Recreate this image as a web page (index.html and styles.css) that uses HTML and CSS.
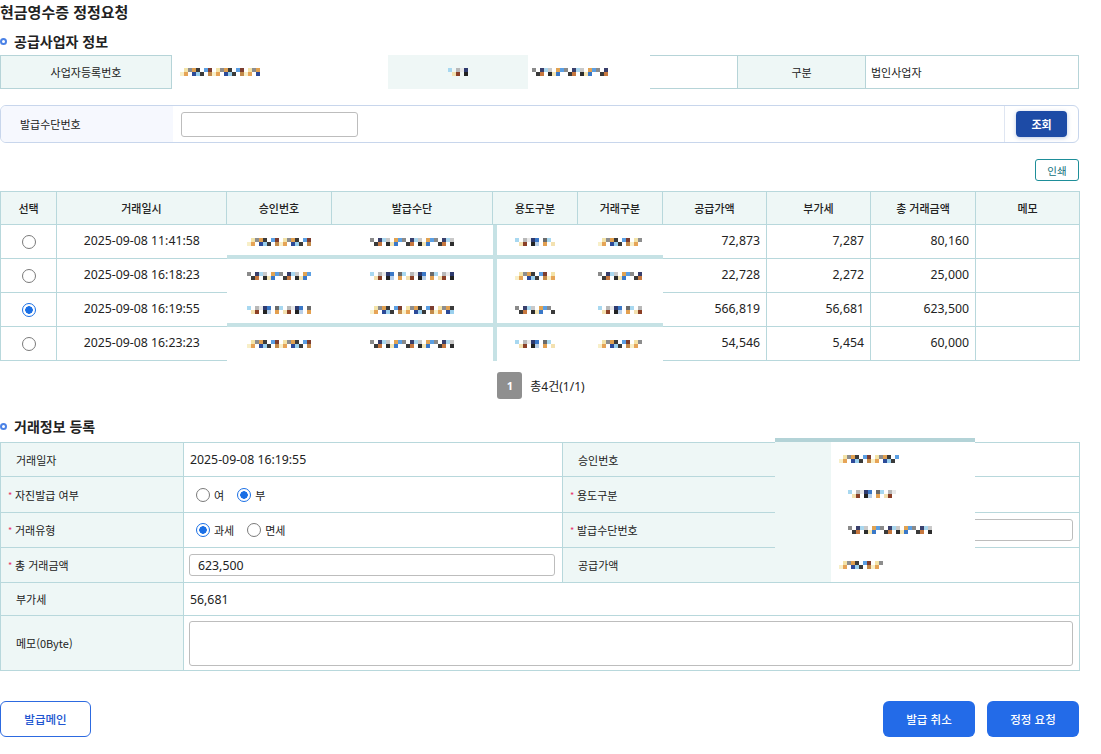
FILE: index.html
```html
<!DOCTYPE html>
<html lang="ko">
<head>
<meta charset="utf-8">
<title>현금영수증 정정요청</title>
<link rel="stylesheet" href="styles.css">
</head>
<body>
<div class="page">
  <h1 class="title">현금영수증 정정요청</h1>
  <h2 class="sec"><span class="ring"></span>공급사업자 정보</h2>

  <div class="info">
    <div class="ic lab">사업자등록번호</div>
    <div class="ic val1"><span class="mz pa w80"></span></div>
    <div class="ic lab2"><span class="mz pc w20"></span></div>
    <div class="ic val2"><span class="mz pb w76"></span></div>
    <div class="ic empty"></div>
    <div class="ic lab">구분</div>
    <div class="ic vend">법인사업자</div>
  </div>

  <div class="search">
    <div class="s-lab">발급수단번호</div>
    <div class="s-field"><input class="s-input" type="text"></div>
    <div class="s-btncell"><button class="btn-q">조회</button></div>
  </div>

  <div class="print-row"><button class="btn-print">인쇄</button></div>

  <table class="grid">
    <colgroup>
      <col class="k1"><col class="k2"><col class="k3"><col class="k4"><col class="k5">
      <col class="k6"><col class="k7"><col class="k8"><col class="k9"><col class="k10">
    </colgroup>
    <thead>
      <tr>
        <th>선택</th><th>거래일시</th><th>승인번호</th><th>발급수단</th><th>용도구분</th>
        <th>거래구분</th><th>공급가액</th><th>부가세</th><th>총 거래금액</th><th>메모</th>
      </tr>
    </thead>
    <tbody>
      <tr class="bar">
        <td><span class="radio"></span></td>
        <td>2025-09-08 11:41:58</td>
        <td class="rd"><span class="mz pa w64"></span></td>
        <td class="rd"><span class="mz pb w84"></span></td>
        <td class="rd c5"><span class="mz pc w40"></span></td>
        <td class="rd"><span class="mz pa w44"></span></td>
        <td class="num">72,873</td><td class="num">7,287</td><td class="num">80,160</td><td></td>
      </tr>
      <tr>
        <td><span class="radio"></span></td>
        <td>2025-09-08 16:18:23</td>
        <td class="rd"><span class="mz pb w64"></span></td>
        <td class="rd"><span class="mz pc w84"></span></td>
        <td class="rd c5"><span class="mz pa w40"></span></td>
        <td class="rd"><span class="mz pb w44"></span></td>
        <td class="num">22,728</td><td class="num">2,272</td><td class="num">25,000</td><td></td>
      </tr>
      <tr class="bar">
        <td><span class="radio on"></span></td>
        <td>2025-09-08 16:19:55</td>
        <td class="rd"><span class="mz pc w64"></span></td>
        <td class="rd"><span class="mz pa w84"></span></td>
        <td class="rd c5"><span class="mz pb w40"></span></td>
        <td class="rd"><span class="mz pc w44"></span></td>
        <td class="num">566,819</td><td class="num">56,681</td><td class="num">623,500</td><td></td>
      </tr>
      <tr>
        <td><span class="radio"></span></td>
        <td>2025-09-08 16:23:23</td>
        <td class="rd"><span class="mz pa w64"></span></td>
        <td class="rd"><span class="mz pb w84"></span></td>
        <td class="rd c5"><span class="mz pc w40"></span></td>
        <td class="rd"><span class="mz pa w44"></span></td>
        <td class="num">54,546</td><td class="num">5,454</td><td class="num">60,000</td><td></td>
      </tr>
    </tbody>
  </table>

  <div class="paging">
    <span class="pg-num">1</span>
    <span class="pg-total">총4건(1/1)</span>
  </div>

  <h2 class="sec sec2"><span class="ring"></span>거래정보 등록</h2>

  <div class="form-wrap">
    <table class="form">
      <colgroup><col class="f1"><col class="f2"><col class="f3"><col class="f4"></colgroup>
      <tr class="r1">
        <th>거래일자</th>
        <td>2025-09-08 16:19:55</td>
        <th>승인번호</th>
        <td></td>
      </tr>
      <tr class="r2">
        <th class="req"><span class="mark">*</span>자진발급 여부</th>
        <td>
          <div class="radios">
            <label class="opt"><span class="radio"></span><span class="kt">여</span></label>
            <label class="opt"><span class="radio on"></span><span class="kt">부</span></label>
          </div>
        </td>
        <th class="req"><span class="mark">*</span>용도구분</th>
        <td></td>
      </tr>
      <tr class="r3">
        <th class="req"><span class="mark">*</span>거래유형</th>
        <td>
          <div class="radios">
            <label class="opt"><span class="radio on"></span><span class="kt">과세</span></label>
            <label class="opt"><span class="radio"></span><span class="kt">면세</span></label>
          </div>
        </td>
        <th class="req"><span class="mark">*</span>발급수단번호</th>
        <td class="pad-in"><input class="f-input" type="text"></td>
      </tr>
      <tr class="r4">
        <th class="req"><span class="mark">*</span>총 거래금액</th>
        <td class="pad-in1"><input class="f-input" type="text" value="623,500"></td>
        <th>공급가액</th>
        <td></td>
      </tr>
      <tr class="r5">
        <th>부가세</th>
        <td colspan="3">56,681</td>
      </tr>
      <tr class="r6">
        <th>메모(0Byte)</th>
        <td colspan="3" class="pad-ta"><textarea class="f-ta"></textarea></td>
      </tr>
    </table>

    <div class="redact">
      <div class="rd-left"></div>
      <div class="rd-right">
        <div class="rd-row"><span class="mz pa w60"></span></div>
        <div class="rd-row in"><span class="mz pc w48"></span></div>
        <div class="rd-row in"><span class="mz pb w84"></span></div>
        <div class="rd-row"><span class="mz pa w44"></span></div>
      </div>
    </div>
  </div>

  <div class="actions">
    <button class="btn-line">발급메인</button>
    <div class="act-right">
      <button class="btn-fill">발급 취소</button>
      <button class="btn-fill">정정 요청</button>
    </div>
  </div>
</div>
</body>
</html>
```

FILE: styles.css
```css
* { box-sizing: border-box; }
html, body { margin: 0; padding: 0; background: #fff; }
body {
  font-family: "Noto Sans", "Noto Sans CJK KR", sans-serif;
  font-size: 12.3px;
  color: #222;
}
.page { width: 1079px; }

.title {
  margin: 0;
  height: 24px;
  line-height: 24px;
  font-family: "Noto Sans CJK KR", sans-serif;
  font-size: 15px;
  font-weight: 700;
  color: #222;
}
.sec {
  margin: 7px 0 0;
  height: 20px;
  display: flex;
  align-items: center;
  gap: 7px;
  font-family: "Noto Sans CJK KR", sans-serif;
  font-size: 14px;
  font-weight: 700;
  color: #222;
}
.sec2 { margin-top: 17px; }
.ring {
  width: 7px;
  height: 7px;
  border: 2px solid #4b82e6;
  border-radius: 50%;
}

/* mosaic (masked values) */
.mz {
  display: inline-block;
  height: 8px;
  vertical-align: middle;
  background-repeat: repeat-x;
  background-size: 32px 4px;
  background-position: 0 0, 0 4px;
}
.pa {
  background-image:
    linear-gradient(90deg, transparent 0 4px, #f3e3a8 4px 8px, #8d8d8d 8px 12px, #e0a050 12px 16px, #3b3b3b 16px 20px, transparent 20px 24px, #5b9fe3 24px 28px, #7c3d2f 28px 32px),
    linear-gradient(90deg, #f8efc8 0 4px, #e6a457 4px 8px, transparent 8px 12px, #2c4a98 12px 16px, #9ad0ee 16px 20px, #3a3a3a 20px 24px, transparent 24px 28px, #c28a4a 28px 32px);
}
.pb {
  background-image:
    linear-gradient(90deg, #8a8a8a 0 4px, transparent 4px 8px, #3a3f6b 8px 12px, #a9d7ef 12px 16px, #c9c9c9 16px 20px, transparent 20px 24px, #e1a352 24px 28px, #5b9fe3 28px 32px),
    linear-gradient(90deg, transparent 0 4px, #3a3a3a 4px 8px, #c7783f 8px 12px, transparent 12px 16px, #2d2d2d 16px 20px, #f5e6b4 20px 24px, #3a78c8 24px 28px, transparent 28px 32px);
}
.pc {
  background-image:
    linear-gradient(90deg, #a8d8f0 0 4px, transparent 4px 8px, #b8b8b8 8px 12px, #e8e8e8 12px 16px, #2e3a6e 16px 20px, #3a78c8 20px 24px, transparent 24px 28px, #6a6a6a 28px 32px),
    linear-gradient(90deg, transparent 0 4px, #f3e1b0 4px 8px, #8b3f26 8px 12px, transparent 12px 16px, #222 16px 20px, #b9cfe8 20px 24px, transparent 24px 28px, #e3a050 28px 32px);
}
.w20 { width: 20px; }
.w40 { width: 40px; }
.w44 { width: 44px; }
.w48 { width: 48px; }
.w60 { width: 60px; }
.w64 { width: 64px; }
.w76 { width: 76px; }
.w80 { width: 80px; }
.w84 { width: 84px; }

/* supplier info row */
.info {
  margin-top: 4px;
  height: 34px;
  display: grid;
  grid-template-columns: 172px 216px 140px 122px 87px 129px 213px;
}
.ic { display: flex; align-items: center; }
.lab {
  justify-content: center;
  background: #eef7f6;
  border: 1px solid #b6d4d8;
  font-family: "Noto Sans CJK KR", sans-serif;
  font-size: 11px;
}
.val1 { padding-left: 8px; }
.lab2 { justify-content: center; background: #eff7f6; }
.val2 { padding-left: 4px; }
.empty { border-top: 1px solid #b6d4d8; border-bottom: 1px solid #b6d4d8; }
.vend {
  border: 1px solid #b6d4d8;
  border-left: 0;
  padding-left: 5px;
  font-family: "Noto Sans CJK KR", sans-serif;
  font-size: 11px;
}

/* search */
.search {
  margin-top: 16px;
  height: 38px;
  border: 1px solid #c8d6ec;
  border-radius: 6px;
  display: flex;
  overflow: hidden;
}
.s-lab {
  width: 172px;
  background: #f6f8fe;
  display: flex;
  align-items: center;
  padding-left: 19px;
  font-family: "Noto Sans CJK KR", sans-serif;
  font-size: 11px;
}
.s-field { flex: 1; display: flex; align-items: center; padding-left: 8px; }
.s-input {
  width: 177px;
  height: 25px;
  border: 1px solid #bdbdbd;
  border-radius: 3px;
  background: #fff;
}
.s-btncell {
  width: 74px;
  border-left: 1px solid #dfe6f2;
  display: flex;
  align-items: center;
  justify-content: center;
}
.btn-q {
  width: 51px;
  height: 26px;
  border: 0;
  border-radius: 4px;
  background: #1d4ba6;
  color: #fff;
  font-family: "Noto Sans CJK KR", sans-serif;
  font-size: 11px;
  font-weight: 700;
  box-shadow: 0 1px 4px rgba(29, 75, 166, 0.3);
}

.print-row { margin-top: 16px; display: flex; justify-content: flex-end; }
.btn-print {
  width: 44px;
  height: 22px;
  border: 1px solid #1e8e99;
  border-radius: 3px;
  background: #fff;
  color: #10707b;
  font-family: "Noto Sans CJK KR", sans-serif;
  font-size: 10.5px;
  padding: 0;
}

/* list table */
.grid {
  margin-top: 10px;
  width: 1079px;
  border-collapse: collapse;
  table-layout: fixed;
}
.k1 { width: 56px; } .k2 { width: 170px; } .k3 { width: 105px; } .k4 { width: 161px; }
.k5 { width: 85px; } .k6 { width: 85px; } .k7 { width: 104px; } .k8 { width: 104px; }
.k9 { width: 105px; } .k10 { width: 104px; }
.grid th, .grid td { border: 1px solid #b8d8dc; padding: 0; }
.grid th {
  height: 33px;
  background: #eef7f6;
  font-family: "Noto Sans CJK KR", sans-serif;
  font-size: 11px;
  font-weight: 500;
  color: #222;
}
.grid td { height: 34px; text-align: center; line-height: 1; }
.grid td.num { text-align: right; padding-right: 6px; }
.grid td.rd {
  border-left-style: hidden;
  border-right-style: hidden;
  border-bottom-style: hidden;
}
.grid tr.bar td.rd { box-shadow: inset 0 -4px 0 #c6e2e5; }
.grid td.rd.c5 { box-shadow: inset 4px 0 0 #c6e2e5; }
.grid tr.bar td.rd.c5 { box-shadow: inset 4px 0 0 #c6e2e5, inset 0 -4px 0 #c6e2e5; }

.radio {
  display: inline-block;
  width: 14px;
  height: 14px;
  border: 1px solid #7a7a7a;
  border-radius: 50%;
  background: #fff;
  vertical-align: middle;
}
.radio.on {
  border-color: #1a6fe5;
  background: radial-gradient(circle, #1a6fe5 0 3.5px, #fff 4px);
}

/* paging */
.paging {
  margin-top: 11px;
  height: 27px;
  display: flex;
  justify-content: center;
  align-items: center;
  gap: 8px;
  padding-left: 3px;
}
.pg-num {
  width: 25px;
  height: 27px;
  border-radius: 3px;
  background: #8f8f8f;
  color: #fff;
  font-weight: 700;
  font-size: 11px;
  display: flex;
  align-items: center;
  justify-content: center;
}
.pg-total { font-size: 12px; color: #222; }

/* form */
.form-wrap { position: relative; margin-top: 6px; }
.form { width: 1079px; border-collapse: collapse; table-layout: fixed; }
.f1 { width: 183px; } .f2 { width: 379px; } .f3 { width: 268px; } .f4 { width: 249px; }
.form th, .form td {
  border: 1px solid #b8d8dc;
  padding: 0 0 0 6px;
  text-align: left;
  font-weight: 400;
}
.form th {
  background: #eef7f6;
  padding-left: 15px;
  font-family: "Noto Sans CJK KR", sans-serif;
  font-size: 11px;
  color: #222;
}
.form th.req { padding-left: 7px; }
.mark {
  display: inline-block;
  width: 7px;
  color: #e8336b;
  font-size: 9px;
  vertical-align: 1px;
}
.r1 td, .r1 th { height: 34px; }
.r2 td, .r2 th { height: 36px; }
.r3 td, .r3 th { height: 35px; }
.r4 td, .r4 th { height: 35px; }
.r5 td, .r5 th { height: 33px; }
.r6 td, .r6 th { height: 55px; }
.radios { display: flex; align-items: center; gap: 13px; margin-left: 6px; }
.opt { display: flex; align-items: center; gap: 4px; }
.kt { font-family: "Noto Sans CJK KR", sans-serif; font-size: 11px; }
.f-input {
  display: block;
  width: 100%;
  height: 22px;
  border: 1px solid #bdbdbd;
  border-radius: 3px;
  padding: 0 8px;
  font-family: "Noto Sans", sans-serif;
  font-size: 12.3px;
  color: #222;
  background: #fff;
}
.form td.pad-in1 { padding: 0 7px 0 5px; }
.form td.pad-in { padding: 0 6px 0 8px; }
.form td.pad-ta { padding: 0 6px 0 5px; }
.f-ta {
  display: block;
  width: 100%;
  height: 45px;
  border: 1px solid #bdbdbd;
  border-radius: 3px;
  resize: none;
  background: #fff;
}

.redact {
  position: absolute;
  left: 775px;
  top: -4px;
  width: 200px;
  height: 144px;
  border-top: 4px solid #b3d3d7;
  display: flex;
}
.rd-left { width: 56px; background: #eef7f6; }
.rd-right {
  flex: 1;
  background: #fff;
  display: grid;
  grid-template-rows: 34px 36px 35px 35px;
  padding-left: 8px;
}
.rd-row { display: flex; align-items: center; }
.rd-row.in { padding-left: 9px; }

/* actions */
.actions {
  margin-top: 30px;
  display: flex;
  justify-content: space-between;
}
.act-right { display: flex; gap: 12px; }
.btn-line, .btn-fill {
  height: 36px;
  border-radius: 6px;
  font-family: "Noto Sans CJK KR", sans-serif;
  font-size: 11.5px;
  font-weight: 500;
  padding: 0;
}
.btn-line {
  width: 91px;
  border: 1px solid #2d6ae0;
  background: #fff;
  color: #2055d0;
}
.btn-fill {
  width: 92px;
  border: 0;
  background: #236be8;
  color: #fff;
}
```
